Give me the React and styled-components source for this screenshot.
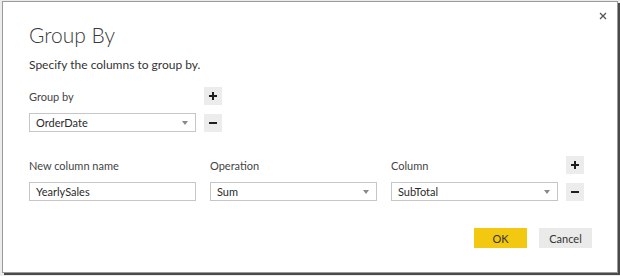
import React from 'react';
import styled, { createGlobalStyle } from 'styled-components';

const GlobalStyle = createGlobalStyle`
  html, body {
    margin: 0;
    padding: 0;
    background: #5a5a5a;
    width: 620px;
    height: 276px;
    overflow: hidden;
  }
  body {
    font-family: Lato, "Open Sans", sans-serif;
  }
`;

const Backdrop = styled.div`
  width: 620px;
  height: 276px;
  background: #ececec;
  padding: 1px 2px 0 2px;
  box-sizing: border-box;
`;

const Dialog = styled.div`
  width: 616px;
  height: 272px;
  box-sizing: border-box;
  background: #fff;
  border: 1px solid #9a9a9a;
  box-shadow: 2px 2px 0 #4a4a4a;
  padding: 0 25px 0 26px;
  display: flex;
  flex-direction: column;
`;

const Header = styled.div`
  display: flex;
  justify-content: space-between;
  align-items: flex-start;
  margin-right: -15px;
`;

const Title = styled.h1`
  margin: 18px 0 0 0;
  font-weight: 300;
  font-size: 21px;
  line-height: 30px;
  color: #3a3a3a;
`;

const CloseButton = styled.button`
  border: none;
  background: none;
  padding: 0;
  margin-top: 9px;
  width: 9px;
  height: 9px;
  display: flex;
  align-items: center;
  justify-content: center;
  cursor: pointer;
`;

const Subtitle = styled.p`
  margin: 6px 0 0 0;
  font-size: 12px;
  line-height: 18px;
  color: #333;
`;

const GroupGrid = styled.div`
  display: grid;
  grid-template-columns: 175px 18px;
  grid-template-rows: 18px 19px;
  row-gap: 8px;
  align-items: center;
  margin-top: 13px;
`;

const AggGrid = styled.div`
  display: grid;
  grid-template-columns: 181px 181px 175px 18px;
  grid-template-rows: 18px 19px;
  row-gap: 8px;
  align-items: center;
  margin-top: 24px;
`;

const Label = styled.span`
  font-size: 11px;
  color: #444;
  line-height: 18px;
  padding-top: ${(p) => (p.$drop ? '2px' : '0')};
`;

const Field = styled.div`
  width: 167px;
  height: 19px;
  box-sizing: border-box;
  border: 1px solid #c6c6c6;
  display: flex;
  align-items: center;
  justify-content: space-between;
  padding: 0 7px 0 6px;
  font-size: 11px;
  color: #2a2a2a;
  background: #fff;
`;

const Arrow = styled.span`
  width: 0;
  height: 0;
  border-left: 3.5px solid transparent;
  border-right: 3.5px solid transparent;
  border-top: 4px solid #8a8a8a;
  margin-top: 1px;
`;

const IconButton = styled.button`
  width: 18px;
  height: 18px;
  border: none;
  padding: 0;
  background: #ececec;
  display: flex;
  align-items: center;
  justify-content: center;
  cursor: pointer;
`;

const Footer = styled.div`
  display: flex;
  justify-content: flex-end;
  gap: 12px;
  margin-top: 27px;
`;

const ActionButton = styled.button`
  width: 53px;
  height: 20px;
  border: none;
  padding: 0;
  font-family: inherit;
  font-size: 11px;
  color: #333;
  background: ${(p) => (p.$primary ? '#f2c811' : '#eaeaea')};
  cursor: pointer;
`;

function Plus() {
  return (
    <svg width="10" height="10" viewBox="0 0 10 10">
      <path d="M5 1v8M1 5h8" stroke="#1e1e1e" strokeWidth="2" />
    </svg>
  );
}

function Minus() {
  return (
    <svg width="10" height="10" viewBox="0 0 10 10">
      <path d="M1 5h8" stroke="#1e1e1e" strokeWidth="2" />
    </svg>
  );
}

function Select({ value }) {
  return (
    <Field>
      <span>{value}</span>
      <Arrow />
    </Field>
  );
}

export default function App() {
  return (
    <>
      <GlobalStyle />
      <Backdrop>
        <Dialog>
          <Header>
            <Title>Group By</Title>
            <CloseButton aria-label="Close">
              <svg width="8" height="8" viewBox="0 0 8 8">
                <path d="M1 1l6 6M7 1l-6 6" stroke="#555" strokeWidth="1.3" />
              </svg>
            </CloseButton>
          </Header>
          <Subtitle>Specify the columns to group by.</Subtitle>

          <GroupGrid>
            <Label $drop>Group by</Label>
            <IconButton><Plus /></IconButton>
            <Select value="OrderDate" />
            <IconButton><Minus /></IconButton>
          </GroupGrid>

          <AggGrid>
            <Label $drop>New column name</Label>
            <Label $drop>Operation</Label>
            <Label $drop>Column</Label>
            <IconButton><Plus /></IconButton>
            <Field>YearlySales</Field>
            <Select value="Sum" />
            <Select value="SubTotal" />
            <IconButton><Minus /></IconButton>
          </AggGrid>

          <Footer>
            <ActionButton $primary>OK</ActionButton>
            <ActionButton>Cancel</ActionButton>
          </Footer>
        </Dialog>
      </Backdrop>
    </>
  );
}
